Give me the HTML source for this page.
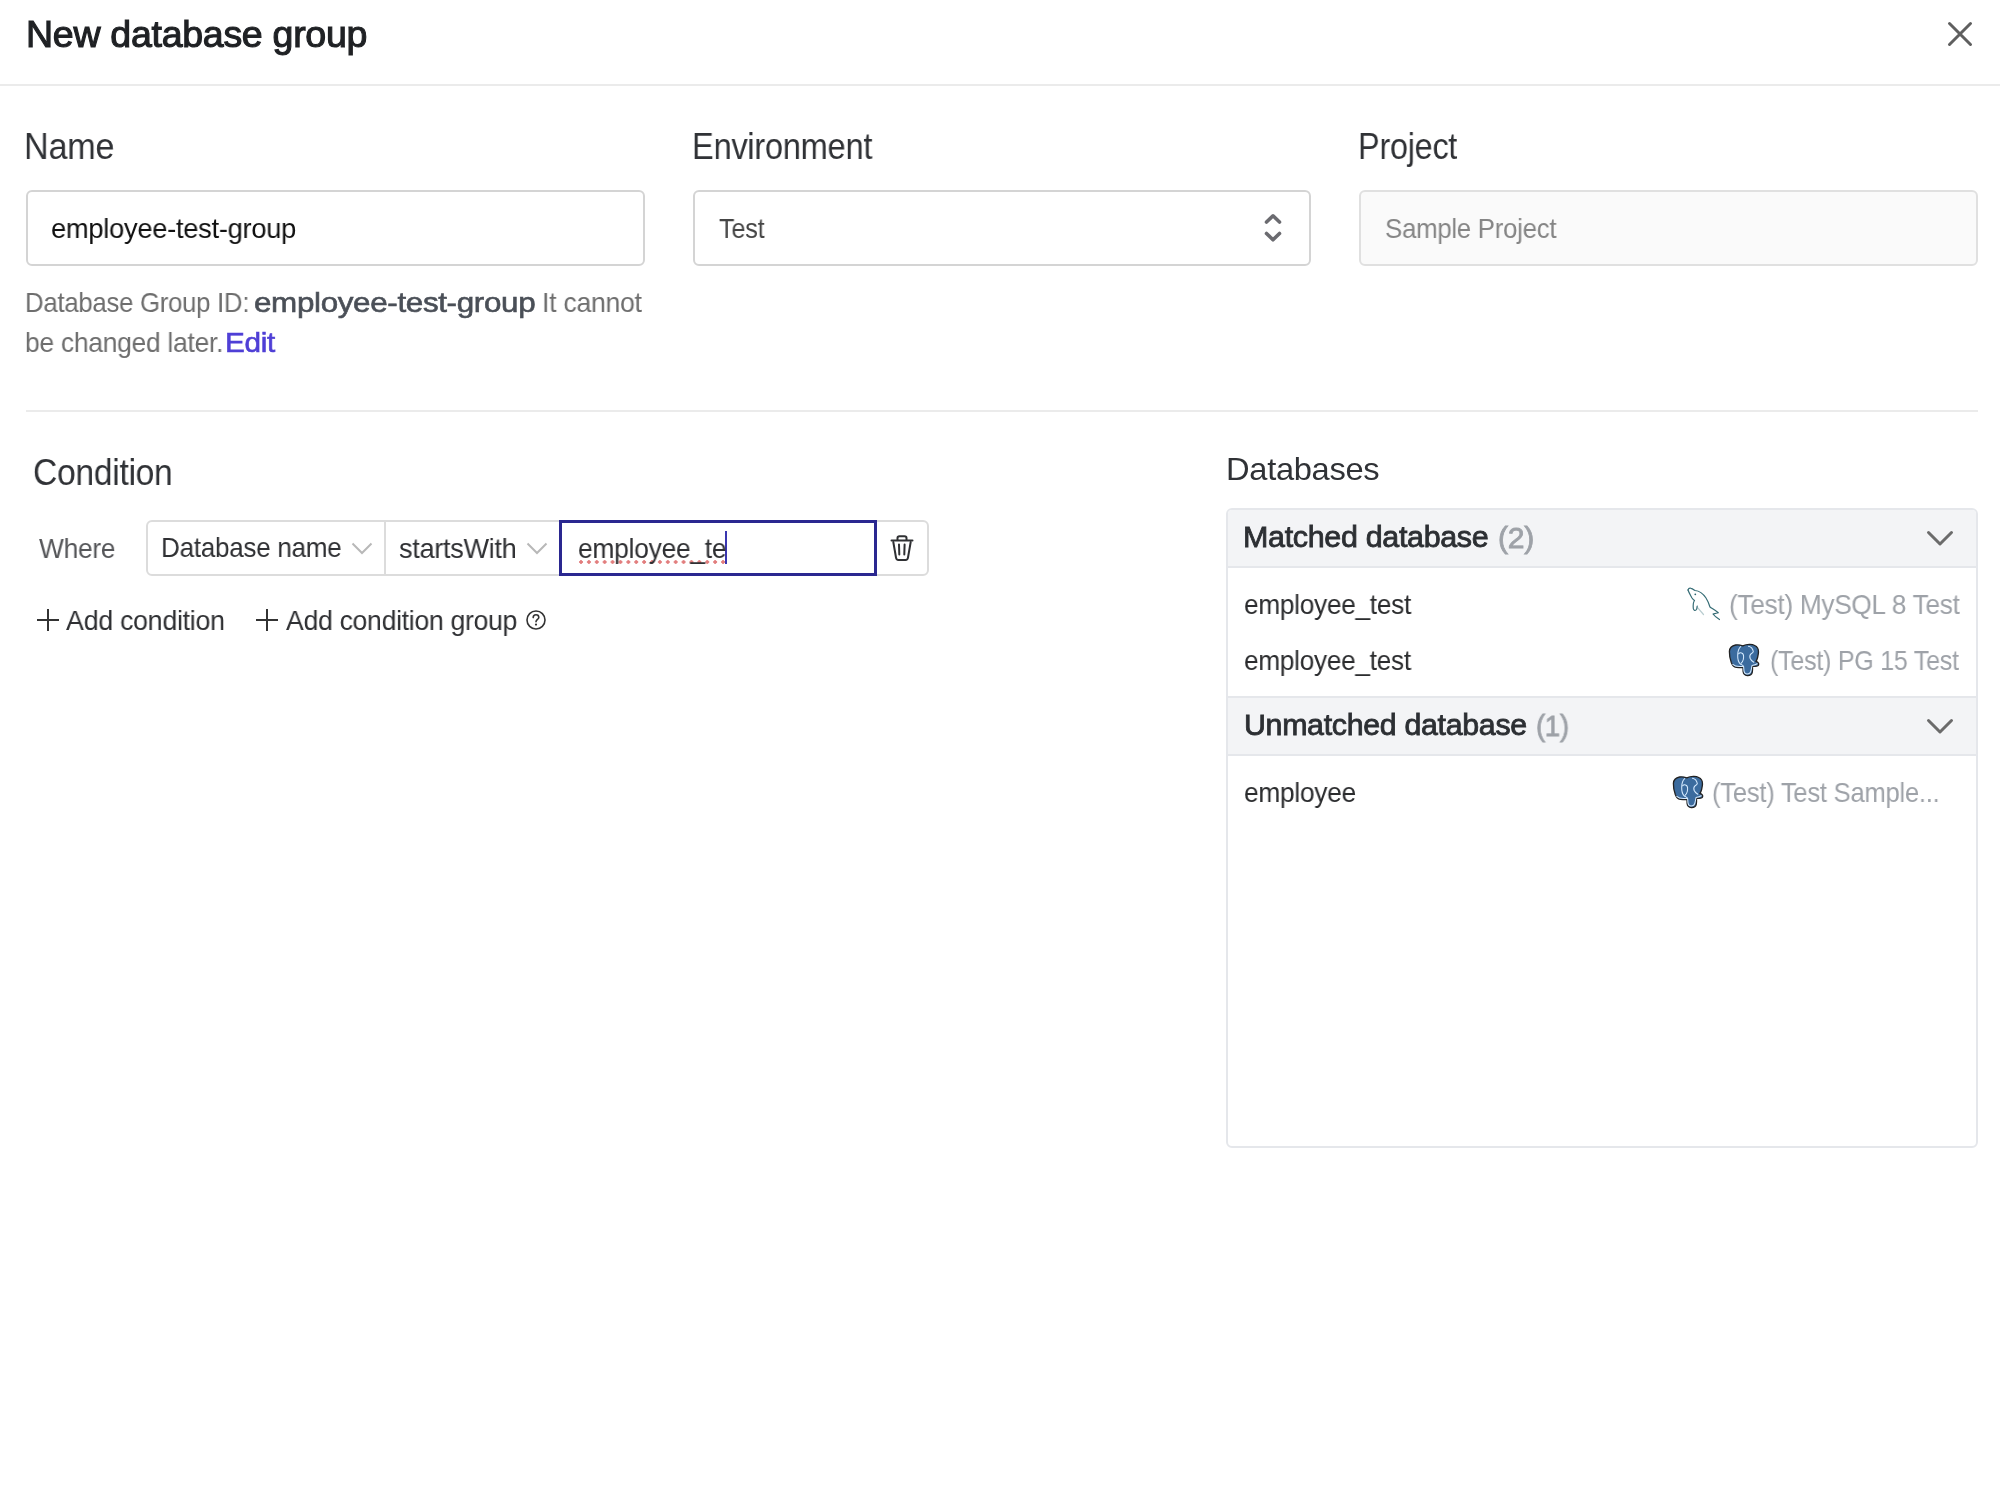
<!DOCTYPE html>
<html>
<head>
<meta charset="utf-8">
<style>
html,body{margin:0;padding:0;background:#fff;}
body{width:2000px;height:1500px;overflow:hidden;position:relative;font-family:"Liberation Sans",sans-serif;}
.t{position:absolute;white-space:pre;line-height:1;will-change:transform;}
.box{position:absolute;box-sizing:border-box;}
svg{position:absolute;overflow:visible;}
</style>
</head>
<body>
<!-- header -->
<svg style="left:1949px;top:23px" width="22" height="22" viewBox="0 0 22 22"><path d="M0.5 0.5 L21.5 21.5 M21.5 0.5 L0.5 21.5" stroke="#5f5f5f" stroke-width="3" stroke-linecap="round" fill="none"/></svg>
<div class="box" style="left:0;top:84px;width:2000px;height:2px;background:#ebebeb;"></div>

<!-- inputs -->
<div class="box" style="left:26px;top:190px;width:619px;height:76px;border:2px solid #d4d4d4;border-radius:6px;"></div>
<div class="box" style="left:693px;top:190px;width:618px;height:76px;border:2px solid #d4d4d4;border-radius:6px;"></div>
<svg style="left:1266px;top:215px" width="14" height="26" viewBox="0 0 14 26"><path d="M0.5 7 L7 0.8 L13.5 7 M0.5 18.5 L7 24.8 L13.5 18.5" stroke="#6b6b70" stroke-width="3.6" stroke-linecap="round" stroke-linejoin="round" fill="none"/></svg>
<div class="box" style="left:1359px;top:190px;width:619px;height:76px;border:2px solid #e0e0e0;border-radius:6px;background:#fafafa;"></div>

<div class="box" style="left:26px;top:410px;width:1952px;height:2px;background:#ebebeb;"></div>

<!-- condition -->
<div class="box" style="left:146px;top:520px;width:783px;height:56px;border:2px solid #dcdcdc;border-radius:6px;"></div>
<div class="box" style="left:384px;top:521px;width:2px;height:54px;background:#dcdcdc;"></div>
<svg style="left:352px;top:543px" width="20" height="11" viewBox="0 0 20 11"><path d="M0.5 0.5 L10 10 L19.5 0.5" stroke="#b8b8b8" stroke-width="2" fill="none"/></svg>
<svg style="left:527px;top:543px" width="20" height="11" viewBox="0 0 20 11"><path d="M0.5 0.5 L10 10 L19.5 0.5" stroke="#b8b8b8" stroke-width="2" fill="none"/></svg>
<div class="box" style="left:559px;top:520px;width:318px;height:56px;border:3px solid #2a2790;background:#fff;"></div>
<div class="box" style="left:579px;top:560px;width:148px;height:4px;background:radial-gradient(circle at 2px 2px,#e27d7d 1.5px,rgba(226,125,125,0) 2.1px) 0 0/7.9px 4px repeat-x;"></div>
<div class="box" style="left:725px;top:531px;width:2px;height:33px;background:#3a36b0;"></div>
<svg style="left:890px;top:535px" width="24" height="26" viewBox="0 0 24 26"><g stroke="#2f3033" stroke-width="2" fill="none" stroke-linecap="round" stroke-linejoin="round"><path d="M7.5 5 V3 C7.5 1.8 8.3 1.2 9.5 1.2 H14.5 C15.7 1.2 16.5 1.8 16.5 3 V5"/><path d="M1.5 5.6 H22.5"/><path d="M3.3 7 L6 22.5 C6.2 24.2 7 25 8.5 25 H15.5 C17 25 17.8 24.2 18 22.5 L20.7 7"/><path d="M9 9.5 L9.3 19.5 M14.6 9.5 L14.3 19.5"/></g></svg>

<svg style="left:37px;top:609px" width="22" height="22" viewBox="0 0 22 22"><path d="M11 0 V22 M0 11 H22" stroke="#333" stroke-width="2" fill="none"/></svg>
<svg style="left:256px;top:609px" width="22" height="22" viewBox="0 0 22 22"><path d="M11 0 V22 M0 11 H22" stroke="#333" stroke-width="2" fill="none"/></svg>
<svg style="left:526px;top:610px" width="20" height="20" viewBox="0 0 20 20"><circle cx="10" cy="10" r="9" stroke="#333" stroke-width="1.6" fill="none"/><path d="M7.2 7.6 C7.2 5.8 8.5 4.8 10 4.8 C11.6 4.8 12.8 5.9 12.8 7.4 C12.8 9.4 10 9.6 10 11.8" stroke="#333" stroke-width="1.6" fill="none" stroke-linecap="round"/><circle cx="10" cy="14.6" r="1.1" fill="#333"/></svg>

<!-- databases panel -->
<div class="box" style="left:1226px;top:508px;width:752px;height:640px;border:2px solid #e5e7eb;border-radius:6px;"></div>
<div class="box" style="left:1228px;top:510px;width:748px;height:56px;background:#f3f4f6;border-radius:4px 4px 0 0;"></div>
<div class="box" style="left:1228px;top:566px;width:748px;height:2px;background:#e5e7eb;"></div>
<svg style="left:1927px;top:531px" width="26" height="15" viewBox="0 0 26 15"><path d="M1.5 1.5 L13 13 L24.5 1.5" stroke="#6b6b6b" stroke-width="3" stroke-linecap="round" stroke-linejoin="round" fill="none"/></svg>
<div class="box" style="left:1228px;top:696px;width:748px;height:2px;background:#e5e7eb;"></div>
<div class="box" style="left:1228px;top:698px;width:748px;height:56px;background:#f3f4f6;"></div>
<div class="box" style="left:1228px;top:754px;width:748px;height:2px;background:#e5e7eb;"></div>
<svg style="left:1927px;top:719px" width="26" height="15" viewBox="0 0 26 15"><path d="M1.5 1.5 L13 13 L24.5 1.5" stroke="#6b6b6b" stroke-width="3" stroke-linecap="round" stroke-linejoin="round" fill="none"/></svg>


<!-- mysql dolphin -->
<svg style="left:1680px;top:580px" width="50" height="50" viewBox="0 0 50 50"><g fill="none" stroke="#356c75" stroke-width="1.2" stroke-linecap="round" stroke-linejoin="round"><path d="M8 10 C8.5 8.5 10 8 11 8.3 C12.5 8.6 13.5 9.5 15 10.5 C19 10.8 23 13.5 26 18 C28 21 29 24 30 27 C31.5 28.3 35 30 38.3 32.8 C36 33.5 34 33.8 33 34 C34.5 36 37 38 39.5 39.5"/><path d="M8 10 C9 13 11 16 12 18 C13 19.5 14.5 20.5 14.5 20.5 C13.3 22 13 25 13.3 28.5 C13.6 30.5 15.5 31 16.5 29.5 C17 28.5 17 27 17.2 26"/><path d="M17.8 27.8 L23.5 34.5" stroke-opacity="0.35"/></g><circle cx="15.3" cy="14.3" r="0.9" fill="#2e6670"/></svg>
<!-- pg elephants -->
<svg style="left:1729px;top:644px" width="30" height="32" viewBox="0 0 30 32"><path d="M0.4 7.5 C0.5 4.5 2.5 1.8 6.6 1 C9.5 0.6 11.8 1.2 13.8 1.9 C16 0.8 18.5 0.3 21 0.4 C24.5 0.6 27.2 1.8 28.6 4 C29.9 6 29.6 9.5 28.6 13.5 C28.2 15 27.6 16.4 27 17.4 C28.2 17.8 29.7 18.8 29.7 20.2 C29.6 21.8 27.8 22.4 25.5 22.3 L23.5 22.2 C23.6 24.5 23.6 27 23.2 28.6 C22.7 30.6 20.8 31.6 18.3 31.5 C15.8 31.4 14.4 30.2 14.1 27.5 L14 23.6 C12.2 23.7 9.8 23.6 7.2 23.3 C4.8 23 3.3 21.2 2.3 18.5 C1.2 15.2 0.3 10.5 0.4 7.5 Z" fill="#3b6b9e" stroke="#222" stroke-width="1.3"/><g fill="none" stroke="#d6ebff" stroke-width="1.05" stroke-linecap="round" stroke-linejoin="round"><path d="M11.7 2.6 C9.8 4.2 8.8 7 8.7 11 C8.6 14.5 8.8 17.5 11.2 19.8 C12.4 20.8 14 21 14.6 22.5 L15 27 C15.3 29 16.3 29.8 17.8 29.9 C19.8 30 21.2 29.2 21.8 27.3 C22.4 25.3 22.6 23.5 23 21.6 C24.8 21.3 26.8 20.8 28.2 19.8"/><path d="M9.6 9.8 C10.5 8.8 12 8.5 13.5 9.5 C14.8 10.6 14.8 13 14.3 15.5 C13.9 17.2 13 18.5 12 19.4"/><path d="M19.5 2.3 C21.8 2.8 23.6 4.2 24.3 7.5 C24.2 8.8 23 9.2 22 9.8 C20.8 10.8 20.6 12.8 21.2 14.5 C21.8 16 23.2 17.2 24.8 18.2"/><path d="M3.8 20.3 C5.5 22 8 22.4 10.5 22.4 C11.8 22.4 13 22.5 13.9 22.6"/></g></svg>
<svg style="left:1673px;top:776px" width="30" height="32" viewBox="0 0 30 32"><path d="M0.4 7.5 C0.5 4.5 2.5 1.8 6.6 1 C9.5 0.6 11.8 1.2 13.8 1.9 C16 0.8 18.5 0.3 21 0.4 C24.5 0.6 27.2 1.8 28.6 4 C29.9 6 29.6 9.5 28.6 13.5 C28.2 15 27.6 16.4 27 17.4 C28.2 17.8 29.7 18.8 29.7 20.2 C29.6 21.8 27.8 22.4 25.5 22.3 L23.5 22.2 C23.6 24.5 23.6 27 23.2 28.6 C22.7 30.6 20.8 31.6 18.3 31.5 C15.8 31.4 14.4 30.2 14.1 27.5 L14 23.6 C12.2 23.7 9.8 23.6 7.2 23.3 C4.8 23 3.3 21.2 2.3 18.5 C1.2 15.2 0.3 10.5 0.4 7.5 Z" fill="#3b6b9e" stroke="#222" stroke-width="1.3"/><g fill="none" stroke="#d6ebff" stroke-width="1.05" stroke-linecap="round" stroke-linejoin="round"><path d="M11.7 2.6 C9.8 4.2 8.8 7 8.7 11 C8.6 14.5 8.8 17.5 11.2 19.8 C12.4 20.8 14 21 14.6 22.5 L15 27 C15.3 29 16.3 29.8 17.8 29.9 C19.8 30 21.2 29.2 21.8 27.3 C22.4 25.3 22.6 23.5 23 21.6 C24.8 21.3 26.8 20.8 28.2 19.8"/><path d="M9.6 9.8 C10.5 8.8 12 8.5 13.5 9.5 C14.8 10.6 14.8 13 14.3 15.5 C13.9 17.2 13 18.5 12 19.4"/><path d="M19.5 2.3 C21.8 2.8 23.6 4.2 24.3 7.5 C24.2 8.8 23 9.2 22 9.8 C20.8 10.8 20.6 12.8 21.2 14.5 C21.8 16 23.2 17.2 24.8 18.2"/><path d="M3.8 20.3 C5.5 22 8 22.4 10.5 22.4 C11.8 22.4 13 22.5 13.9 22.6"/></g></svg>
<div class="t" style="left:26.0px;top:16.18px;font-size:37px;font-weight:400;color:#1f2124;letter-spacing:-0.3px;transform-origin:0 0;transform:scaleX(1.015);-webkit-text-stroke:1.1px #1f2124;">New database group</div>
<div class="t" style="left:24.25px;top:127.68px;font-size:37px;font-weight:400;color:#303236;letter-spacing:-0.3px;transform-origin:0 0;transform:scaleX(0.9247);">Name</div>
<div class="t" style="left:692.0px;top:127.68px;font-size:37px;font-weight:400;color:#303236;letter-spacing:-0.3px;transform-origin:0 0;transform:scaleX(0.8812);">Environment</div>
<div class="t" style="left:1358.2px;top:127.68px;font-size:37px;font-weight:400;color:#303236;letter-spacing:-0.3px;transform-origin:0 0;transform:scaleX(0.8765);">Project</div>
<div class="t" style="left:51.3px;top:215.3px;font-size:28px;font-weight:400;color:#111;letter-spacing:-0.3px;transform-origin:0 0;transform:scaleX(0.9759);">employee-test-group</div>
<div class="t" style="left:719.0px;top:214.6px;font-size:28px;font-weight:400;color:#454545;letter-spacing:-0.3px;transform-origin:0 0;transform:scaleX(0.9041);">Test</div>
<div class="t" style="left:1384.8px;top:215.3px;font-size:28px;font-weight:400;color:#858585;letter-spacing:-0.3px;transform-origin:0 0;transform:scaleX(0.9223);">Sample Project</div>
<div class="t" style="left:24.6px;top:289.3px;font-size:28px;font-weight:400;color:#6e6e6e;letter-spacing:-0.3px;transform-origin:0 0;transform:scaleX(0.9199);">Database Group ID:</div>
<div class="t" style="left:253.8px;top:289.3px;font-size:28px;font-weight:400;color:#4a4f57;letter-spacing:-0.3px;transform-origin:0 0;transform:scaleX(1.12);-webkit-text-stroke:0.6px #4a4f57;">employee-test-group</div>
<div class="t" style="left:542.3px;top:289.3px;font-size:28px;font-weight:400;color:#6e6e6e;letter-spacing:-0.3px;transform-origin:0 0;transform:scaleX(0.9515);">It cannot</div>
<div class="t" style="left:24.6px;top:328.5px;font-size:28px;font-weight:400;color:#6e6e6e;letter-spacing:-0.3px;transform-origin:0 0;transform:scaleX(0.9447);">be changed later.</div>
<div class="t" style="left:224.8px;top:328.5px;font-size:28px;font-weight:400;color:#4f3fd6;letter-spacing:-0.3px;transform-origin:0 0;transform:scaleX(1.061);-webkit-text-stroke:0.6px #4f3fd6;">Edit</div>
<div class="t" style="left:32.7px;top:453.98px;font-size:37px;font-weight:400;color:#303236;letter-spacing:-0.3px;transform-origin:0 0;transform:scaleX(0.908);">Condition</div>
<div class="t" style="left:38.7px;top:535.3px;font-size:28px;font-weight:400;color:#555659;letter-spacing:-0.3px;transform-origin:0 0;transform:scaleX(0.94);">Where</div>
<div class="t" style="left:161.2px;top:533.7px;font-size:28px;font-weight:400;color:#2f3033;letter-spacing:-0.3px;transform-origin:0 0;transform:scaleX(0.9309);">Database name</div>
<div class="t" style="left:399.2px;top:534.8px;font-size:28px;font-weight:400;color:#2f3033;letter-spacing:-0.3px;transform-origin:0 0;transform:scaleX(0.9664);">startsWith</div>
<div class="t" style="left:577.8px;top:534.8px;font-size:28px;font-weight:400;color:#2f3033;letter-spacing:-0.3px;transform-origin:0 0;transform:scaleX(0.9444);">employee_te</div>
<div class="t" style="left:66.25px;top:607.3px;font-size:28px;font-weight:400;color:#2f3033;letter-spacing:-0.3px;transform-origin:0 0;transform:scaleX(0.9574);">Add condition</div>
<div class="t" style="left:285.7px;top:607.3px;font-size:28px;font-weight:400;color:#2f3033;letter-spacing:-0.3px;transform-origin:0 0;transform:scaleX(0.9497);">Add condition group</div>
<div class="t" style="left:1226.0px;top:452.51px;font-size:32px;font-weight:400;color:#303236;letter-spacing:-0.3px;transform-origin:0 0;transform:scaleX(1.0204);">Databases</div>
<div class="t" style="left:1243.4px;top:523.25px;font-size:29px;font-weight:400;color:#2c2f33;letter-spacing:-0.3px;transform-origin:0 0;transform:scaleX(1.0494);-webkit-text-stroke:0.8px #2c2f33;">Matched database</div>
<div class="t" style="left:1498.4px;top:524.25px;font-size:29px;font-weight:400;color:#9ea2a8;letter-spacing:-0.3px;transform-origin:0 0;transform:scaleX(1.039);-webkit-text-stroke:0.8px #9ea2a8;">(2)</div>
<div class="t" style="left:1243.8px;top:590.9px;font-size:28px;font-weight:400;color:#2b2c2e;letter-spacing:-0.3px;transform-origin:0 0;transform:scaleX(0.937);">employee_test</div>
<div class="t" style="left:1728.5px;top:591.0px;font-size:28px;font-weight:400;color:#9ea2a8;letter-spacing:-0.3px;transform-origin:0 0;transform:scaleX(0.9356);">(Test) MySQL 8 Test</div>
<div class="t" style="left:1243.6px;top:646.9px;font-size:28px;font-weight:400;color:#2b2c2e;letter-spacing:-0.3px;transform-origin:0 0;transform:scaleX(0.936);">employee_test</div>
<div class="t" style="left:1770.0px;top:647.1px;font-size:28px;font-weight:400;color:#9ea2a8;letter-spacing:-0.3px;transform-origin:0 0;transform:scaleX(0.8958);">(Test) PG 15 Test</div>
<div class="t" style="left:1243.5px;top:711.45px;font-size:29px;font-weight:400;color:#2c2f33;letter-spacing:-0.3px;transform-origin:0 0;transform:scaleX(1.0463);-webkit-text-stroke:0.8px #2c2f33;">Unmatched database</div>
<div class="t" style="left:1535.6px;top:712.45px;font-size:29px;font-weight:400;color:#9ea2a8;letter-spacing:-0.3px;transform-origin:0 0;transform:scaleX(0.9484);-webkit-text-stroke:0.8px #9ea2a8;">(1)</div>
<div class="t" style="left:1243.5px;top:778.8px;font-size:28px;font-weight:400;color:#2b2c2e;letter-spacing:-0.3px;transform-origin:0 0;transform:scaleX(0.9401);">employee</div>
<div class="t" style="left:1711.5px;top:779.0px;font-size:28px;font-weight:400;color:#9ea2a8;letter-spacing:-0.3px;transform-origin:0 0;transform:scaleX(0.9155);">(Test) Test Sample...</div>
</body>
</html>
